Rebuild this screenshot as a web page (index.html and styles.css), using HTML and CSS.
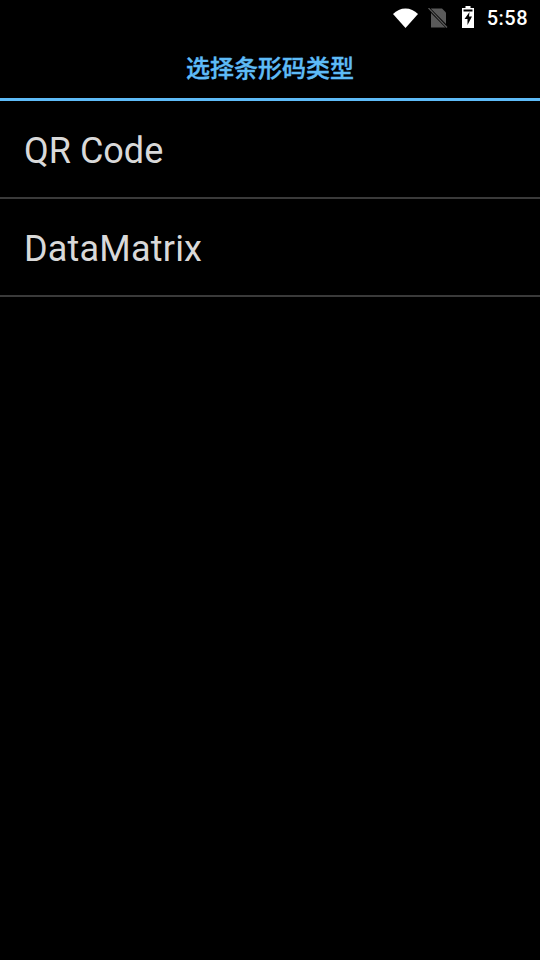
FILE: index.html
```html
<!DOCTYPE html>
<html lang="zh">
<head>
    <meta charset="UTF-8">
    <meta name="viewport" content="width=device-width, initial-scale=1.0">
    <title>选择条形码类型</title>
    <link rel="stylesheet" href="styles.css">
</head>
<body>

<div class="status-bar">
    <svg class="icon-wifi" width="25" height="20" viewBox="0 0 25 20">
        <path d="M0 6C3.500 2.500 7.800 0.500 12.500 0.500S21.500 2.500 25 6L12.500 20z" fill="#fff"/>
    </svg>
    <svg class="icon-sim" width="20" height="20" viewBox="0 0 20 20">
        <path d="M3 0.500h11l4 4v15H3z" fill="#5a5a5a"/>
        <path d="M0 0L20 20" stroke="#000" stroke-width="3"/>
        <path d="M0.500 0L19 19.500" stroke="#5a5a5a" stroke-width="1.200"/>
    </svg>
    <svg class="icon-battery" width="12" height="22" viewBox="0 0 12 22">
        <path fill-rule="evenodd" fill="#fff" d="M3.500 0h5v2H12v20H0V2h3.500zM1.500 3.500v2h9v-2zM7.500 6L2.500 13h3v6l4.500-8.500H7z"/>
    </svg>
    <span class="clock">5:58</span>
</div>

<h1 class="title">选择条形码类型</h1>

<ul class="type-list">
    <li class="qr-item">QR Code</li>
    <li>DataMatrix</li>
</ul>

</body>
</html>
```

FILE: styles.css
```css
body {
    margin: 0;
    width: 540px;
    height: 960px;
    overflow: hidden;
    background: #000;
    font-family: Roboto, "Noto Sans CJK SC", sans-serif;
}
.status-bar {
    height: 36px;
    display: flex;
    align-items: center;
    justify-content: flex-end;
    padding-right: 12px;
}
.icon-wifi {
    margin-right: 10px;
}
.icon-sim {
    margin-right: 14px;
}
.icon-battery {
    margin-right: 13px;
    margin-bottom: 2px;
}
.clock {
    color: #fff;
    font-size: 20px;
    font-weight: 500;
    letter-spacing: 0.5px;
}
.title {
    margin: 0;
    height: 62px;
    line-height: 66px;
    text-align: center;
    color: #5ebbf7;
    font-size: 24px;
    font-weight: 500;
    -webkit-text-stroke: 0.4px #5ebbf7;
    border-bottom: 3px solid #5ebbf7;
}
.type-list {
    margin: 0;
    padding: 0;
    list-style: none;
}
.type-list li {
    height: 96px;
    line-height: 100px;
    padding-left: 24px;
    color: #d9d9d9;
    font-size: 36px;
    letter-spacing: 0.2px;
    border-bottom: 2px solid #3a3a3a;
}
.type-list .qr-item {
    letter-spacing: 0;
}
```
